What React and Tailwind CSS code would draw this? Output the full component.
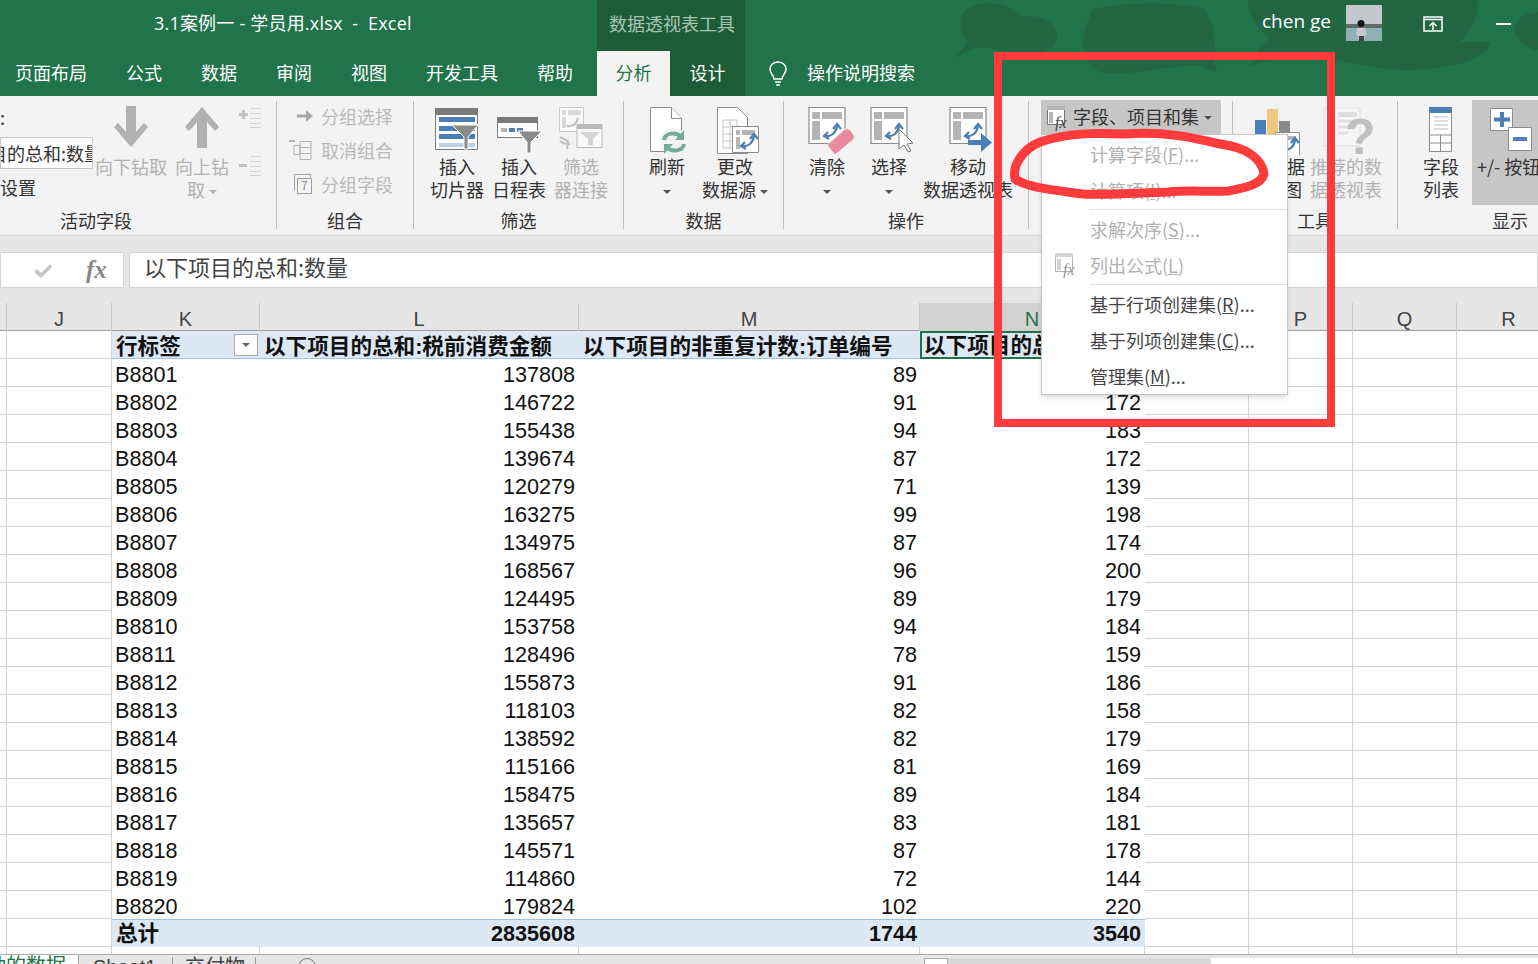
import React from 'react';

const rows = [
  ['B8801', '137808', '89', ''],
  ['B8802', '146722', '91', '172'],
  ['B8803', '155438', '94', '183'],
  ['B8804', '139674', '87', '172'],
  ['B8805', '120279', '71', '139'],
  ['B8806', '163275', '99', '198'],
  ['B8807', '134975', '87', '174'],
  ['B8808', '168567', '96', '200'],
  ['B8809', '124495', '89', '179'],
  ['B8810', '153758', '94', '184'],
  ['B8811', '128496', '78', '159'],
  ['B8812', '155873', '91', '186'],
  ['B8813', '118103', '82', '158'],
  ['B8814', '138592', '82', '179'],
  ['B8815', '115166', '81', '169'],
  ['B8816', '158475', '89', '184'],
  ['B8817', '135657', '83', '181'],
  ['B8818', '145571', '87', '178'],
  ['B8819', '114860', '72', '144'],
  ['B8820', '179824', '102', '220'],
];

const gridCols = 'grid grid-cols-[7px_105px_148px_319px_341px_225px_104px_104px_104px_104px]';
const rowGrid = `${gridCols} grid-rows-[28px]`;

const Caret = ({ className = '' }) => (
  <svg width="8" height="4" viewBox="0 0 8 4" className={`inline-block ${className}`}>
    <path d="M0 0h8L4 4z" fill="currentColor" />
  </svg>
);

const Swap = ({ x = 0, y = 0, color = '#4a7fb5' }) => (
  <g transform={`translate(${x} ${y})`} fill="none" stroke={color} strokeWidth="2.200">
    <path d="M2 14c6 1 11-3 12-10" />
    <path d="M10 7l4-5 4 5M5 10l-4 4 5 3" />
  </g>
);

const PivotBase = ({ children }) => (
  <svg width="62" height="50" viewBox="0 0 62 50">
    <path d="M13 2.500h36v36H13z" fill="#fff" stroke="#8c8c8c" strokeWidth="1.200" />
    <path d="M16 7h8v7h-8zM26 7h20v7H26zM16 16h8v19h-8z" fill="#b4b4b4" />
    <Swap x={27} y={17} />
    {children}
  </svg>
);

const SlicerIcon = () => (
  <svg width="46" height="50" viewBox="0 0 46 50">
    <path d="M1.500 3.500h42v41h-42z" fill="#fff" stroke="#7a7a7a" />
    <path d="M1 3h43v7H1z" fill="#7a7a7a" />
    <path d="M5 12h36v5H5zM5 21h36v5H5zM5 29h36v5H5z" fill="#4a7fb5" />
    <path d="M5 38h36v4H5z" fill="#bcd0e6" />
    <path d="M18 20h26L34 32v12h-4V32z" fill="#8a8a8a" stroke="#fff" />
  </svg>
);

const TimelineIcon = () => (
  <svg width="46" height="50" viewBox="0 0 46 50">
    <path d="M1.500 12.500h40v20h-40z" fill="#fff" stroke="#7a7a7a" />
    <path d="M1 12h41v6H1z" fill="#7a7a7a" />
    <path d="M5 23h6v4H5z" fill="#b4b4b4" />
    <path d="M13 23h6v4h-6zM21 23h6v4h-6z" fill="#4a7fb5" />
    <path d="M22 26h24L35 37v11h-4V37z" fill="#8a8a8a" stroke="#fff" />
  </svg>
);

const ConnectIcon = () => (
  <svg width="46" height="50" viewBox="0 0 46 50" opacity="0.55">
    <path d="M1.500 2.500h24v24h-24z" fill="#fff" stroke="#a8a8a8" />
    <path d="M4 5h4v5H4zM10 5h13v5H10zM4 12h4v11H4z" fill="#c4c4c4" />
    <path d="M9 21c5 1 10-2 11-8" fill="none" stroke="#999" strokeWidth="2" />
    <path d="M19 19.500h25v23H19z" fill="#fff" stroke="#8c8c8c" />
    <path d="M19 19h25v5H19z" fill="#8c8c8c" />
    <path d="M22 27h20l-7 7v6h-5v-6z" fill="#bbb" />
    <path d="M2 32l8 4-1 8M2 36c3 3 6 3 10 3" fill="none" stroke="#999" strokeWidth="2" />
  </svg>
);

const RefreshIcon = () => (
  <svg width="46" height="50" viewBox="0 0 46 50">
    <path d="M6.500 2.500h21l10 11v33h-31z" fill="#fff" stroke="#8c8c8c" />
    <path d="M27.500 2.500v11h10" fill="#fff" stroke="#8c8c8c" />
    <circle cx="30" cy="37" r="14" fill="#f3f3f3" />
    <path d="M20 35c1-7 12-9 17-3M40 39c-1 7-12 9-17 3" fill="none" stroke="#72ad95" strokeWidth="4" />
    <path d="M40 25v10h-9zM20 49V39h9z" fill="#72ad95" />
  </svg>
);

const ChangeSourceIcon = () => (
  <svg width="50" height="50" viewBox="0 0 50 50" className="ml-[8px]">
    <path d="M3.500 2.500h20l10 10v36h-30z" fill="#fff" stroke="#8c8c8c" />
    <path d="M9 15h14v28H9z" fill="none" stroke="#c4c4c4" />
    <path d="M9 22h14M9 29h14M9 36h14M16 15v28" stroke="#c4c4c4" />
    <path d="M18.500 21.500h26v26h-26z" fill="#fff" stroke="#8c8c8c" />
    <path d="M22 25h4v5h-4zM28 25h13v5H28zM22 32h4v12h-4z" fill="#b4b4b4" />
    <Swap x={26} y={27} />
  </svg>
);

const ChartIcon = () => (
  <svg width="62" height="50" viewBox="0 0 62 50">
    <path d="M11 15h11v30H11z" fill="#4a7fb5" />
    <path d="M23 4h11v40H23z" fill="#efc87d" />
    <path d="M35 16h11v28H35z" fill="#8a8a8a" />
    <path d="M31.500 27.500h24v24h-24z" fill="#fff" stroke="#8c8c8c" />
    <path d="M35 31h4v4h-4zM41 31h11v4H41z" fill="#b4b4b4" />
    <Swap x={37} y={31} />
  </svg>
);

const RecommendIcon = () => (
  <svg width="62" height="50" viewBox="0 0 62 50">
    <path d="M9 3h36v38H9z" fill="#f6f6f6" stroke="#dcdcdc" />
    <path d="M12 7h8v30h-8zM23 7h19v5H23z" fill="#dcdcdc" />
    <path d="M23 16h19M23 22h19M23 28h10" stroke="#e4dce4" strokeWidth="3" />
    <text x="30" y="49" fontSize="50" fontWeight="700" fill="#bfbfbf" fontFamily="Liberation Sans, sans-serif">?</text>
  </svg>
);

const FieldListIcon = () => (
  <svg width="26" height="50" viewBox="0 0 26 50">
    <path d="M1.500 2.500h22v44h-22z" fill="#fff" stroke="#8c8c8c" />
    <path d="M1 2h23v6H1z" fill="#4a7fb5" />
    <path d="M6 12h14M6 16h14M6 20h14M6 24h14" stroke="#bbb" />
    <path d="M1 30h23M1 38h23M12.500 30v16" stroke="#8c8c8c" />
  </svg>
);

const PlusMinusIcon = () => (
  <svg width="46" height="46" viewBox="0 0 46 46">
    <path d="M1.500 1.500h22v22h-22z" fill="#fff" stroke="#8c8c8c" />
    <path d="M5 10.500h6V5h4v5.500h6v4h-6V20h-4v-5.500H5z" fill="#4a7fb5" />
    <path d="M19.500 20.500h23v23h-23z" fill="#fff" stroke="#8c8c8c" />
    <path d="M24 30h14v4H24z" fill="#4a7fb5" />
  </svg>
);

const ListFxIcon = ({ muted }) => (
  <svg width="24" height="26" viewBox="0 0 24 26" opacity={muted ? 0.55 : 1}>
    <path d="M1.500 1.500h17v18h-17z" fill="#fff" stroke="#777" />
    <path d="M1 1h18v4H1zM3 7h4v11H3z" fill="#b4b4b4" />
    <text x="9" y="23" fontSize="16" fontStyle="italic" fontFamily="Liberation Serif, serif" fill="#444">fx</text>
  </svg>
);

const IndentIcon = ({ minus }) => (
  <svg width="24" height="22" viewBox="0 0 24 22" opacity="0.75">
    <path d={minus ? 'M1 9h8v3H1z' : 'M1 6h3V3h3v3h3v3H7v3H4V9H1z'} fill="#b1b1b1" />
    <path d="M12 1.500h11M12 6.500h11M12 11.500h11M12 16.500h11M12 20.500h11" stroke="#c8c8c8" />
  </svg>
);

const BigBtn = ({ w, icon, lines, disabled }) => (
  <div className={`flex flex-col items-center ${w} ${disabled ? 'text-[#b1b1b1]' : 'text-[#333]'}`}>
    <div className="flex h-[50px] items-start justify-center">{icon}</div>
    <div className="text-center text-[18px] leading-[23px] whitespace-nowrap">
      {lines.map((l, i) => (
        <div key={i}>{l}</div>
      ))}
    </div>
  </div>
);

const Group = ({ w, label, labelClass = '', className = '', children }) => (
  <>
    <div className={`flex ${w} shrink-0 flex-col`}>
      <div className={`flex h-[112px] pt-[9px] ${className}`}>{children}</div>
      <div className={`h-[24px] text-center text-[18px] leading-[24px] text-[#333] ${labelClass}`}>{label}</div>
    </div>
    <div className="mt-[5px] h-[128px] w-px shrink-0 bg-[#bdbdbd]" />
  </>
);

const SmallRow = ({ icon, text }) => (
  <div className="flex h-[34px] items-center text-[18px] text-[#b9b9b9]">
    <div className="flex w-[44px] shrink-0 justify-end pr-[8px]">{icon}</div>
    {text}
  </div>
);

const MenuItem = ({ text, hot, rest, disabled, icon }) => (
  <div className={`flex h-[36px] items-center text-[18px] ${disabled ? 'text-[#b1b1b1]' : 'text-[#444]'}`}>
    <div className="flex w-[48px] shrink-0 justify-center">{icon}</div>
    <span>
      {text}(<span className="underline">{hot}</span>){rest}
    </span>
  </div>
);

const Ink = () => (
  <svg width="1538" height="964" viewBox="0 0 1538 964" className="pointer-events-none absolute top-0 left-0">
    <path d="M998 56h333v367H998z" fill="none" stroke="#ff3b3b" strokeWidth="8" />
    <path
      d="M1040 142c30-10 60-9 85-8 40-3 70 4 95 10 25 3 42 14 44 30-3 11-20 14-36 17-18 1-40-1-60 1-30 1-60 3-85 2-30-4-55-6-68-15-3-14 8-30 25-37z"
      fill="none"
      stroke="#ff3b3b"
      strokeWidth="9"
      strokeLinejoin="round"
    />
  </svg>
);

export default function App() {
  return (
    <div className="relative h-[964px] w-[1538px] overflow-hidden bg-white font-['Noto_Sans_CJK_SC',sans-serif] text-[#222]">
      {/* title + tabs */}
      <div className="relative h-[96px] overflow-hidden bg-[#21734a] text-white">
        <svg width="1538" height="96" viewBox="0 0 1538 96" className="absolute top-0 left-0" fill="#226742">
          <path d="M955 58l13-16c-13-17-10-37 17-39 20-1 30 7 35 14 20-3 37 5 37 19 0 14-17 20-42 18-15-4-30-8-40-6z" />
          <path d="M1092 10c18-7 88-10 113 0 10 15 12 40 9 50l3 12-17-6c-30-2-70 12-100 6-15-7-20-27-15-42z" />
          <path d="M1248 0h230c0 20-8 30-18 42h30c2 18-50 30-90 28-30-2-60-8-90-18-20 3-40 8-60 14 5-16 12-21 20-28-15-13-22-23-22-38z" />
          <path d="M1538 12c-13 0-23 8-24 18 6 14 16 20 24 20z" />
        </svg>
        <div className="relative flex h-[51px]">
          <div className="w-[597px] pt-[10px] pl-[154px] font-['Open_Sans','Noto_Sans_CJK_SC',sans-serif] text-[18px] leading-[27px] tracking-[0.2px] whitespace-pre">3.1案例一 - 学员用.xlsx  -  Excel</div>
          <div className="w-[148px] bg-[#1e5c38] pt-[10px] pl-[12px] text-[18px] leading-[27px] text-[#a5c6b2]">数据透视表工具</div>
          <div className="flex flex-1 items-start justify-end">
            <div className="pt-[8px] font-['Open_Sans',sans-serif] text-[19px] leading-[27px]">chen ge</div>
            <svg width="36" height="36" viewBox="0 0 36 36" className="mt-[5px] ml-[15px]">
              <path d="M0 0h36v20H0z" fill="#c4c8cc" />
              <path d="M0 19h36v4H0z" fill="#5f6c66" />
              <path d="M0 23h36v13H0z" fill="#8fb0b5" />
              <circle cx="15" cy="18.500" r="3.500" fill="#141414" />
              <path d="M11 23h8l2 7h-2l-1 6h-5l-1-6h-2z" fill="#c9c9d1" />
              <path d="M13 31h5v5h-5z" fill="#444" />
            </svg>
            <svg width="20" height="16" viewBox="0 0 20 16" className="mt-[16px] ml-[41px]">
              <path d="M1 1h18v14H1z" fill="none" stroke="#fff" strokeWidth="1.500" />
              <path d="M1 3.500h18M10 14V7M6.500 10L10 6.500l3.500 3.500" fill="none" stroke="#fff" strokeWidth="1.500" />
            </svg>
            <div className="mt-[23px] mr-[27px] ml-[53px] h-[2px] w-[15px] bg-white" />
          </div>
        </div>
        <div className="relative flex h-[45px] items-stretch text-[18px] leading-[42px]">
          <div className="flex w-[597px] shrink-0 gap-[39px] pl-[15px]">
            {['页面布局', '公式', '数据', '审阅', '视图', '开发工具', '帮助'].map((t) => (
              <span key={t}>{t}</span>
            ))}
          </div>
          <div className="w-[73px] bg-[#f3f3f3] text-center text-[#217346]">分析</div>
          <div className="w-[75px] bg-[#1e5c38] text-center">设计</div>
          <svg width="22" height="26" viewBox="0 0 22 26" className="mt-[10px] ml-[22px]" fill="none" stroke="#fff" strokeWidth="1.500">
            <path d="M7 18c0-4-4-5-4-10a8 7 0 0 1 16 0c0 5-4 6-4 10zM8 21h6M9 24h4" />
          </svg>
          <span className="ml-[18px]">操作说明搜索</span>
        </div>
      </div>

      {/* ribbon */}
      <div className="flex h-[140px] overflow-hidden border-b border-[#d4d4d4] bg-[#f3f3f3]">
        <Group w="w-[276px]" label="活动字段" labelClass="pr-[84px]">
          <div className="-mt-[9px] flex w-[93px] shrink-0 flex-col text-[18px] text-[#333]">
            <div className="h-[41px] pt-[8px] leading-[27px]">:</div>
            <div className="h-[32px] overflow-hidden border border-[#c6c6c6] bg-white text-[18px] leading-[30px] whitespace-nowrap">
              <span className="-ml-[12px] inline-block">目的总和:数量</span>
            </div>
            <div className="pt-[5px] leading-[27px]">设置</div>
          </div>
          <BigBtn
            w="w-[76px]"
            disabled
            icon={
              <svg width="34" height="44" viewBox="0 0 34 44"><path d="M12 1h10v26l8-9 4 4-17 20L0 22l4-4 8 9z" fill="#b1b1b3" /></svg>
            }
            lines={['向下钻取']}
          />
          <BigBtn
            w="w-[66px]"
            disabled
            icon={
              <svg width="34" height="44" viewBox="0 0 34 44"><path d="M12 43h10V17l8 9 4-4L17 2 0 22l4 4 8-9z" fill="#b1b1b3" /></svg>
            }
            lines={['向上钻', <span key="q">取 <Caret /></span>]}
          />
          <div className="mt-[2px] flex flex-col gap-[26px] pl-[3px]">
            <IndentIcon />
            <IndentIcon minus />
          </div>
        </Group>

        <Group w="w-[136px]" label="组合" className="flex-col !pt-[3px]">
          <SmallRow
            text="分组选择"
            icon={<svg width="16" height="12" viewBox="0 0 16 12"><path d="M0 4.500h9V0l7 6-7 6V7.500H0z" fill="#aaa" /></svg>}
          />
          <SmallRow
            text="取消组合"
            icon={
              <svg width="24" height="24" viewBox="0 0 24 24" fill="none" stroke="#b1b1b1">
                <path d="M11 3.500h11v18H11zM11 9.500h11M11 15.500h11M5 7.500h6v9H5z" />
                <path d="M0 3h6" strokeWidth="2" />
              </svg>
            }
          />
          <SmallRow
            text="分组字段"
            icon={
              <svg width="20" height="22" viewBox="0 0 20 22" fill="none" stroke="#a0a0a0">
                <path d="M1.500 1.500h16v3M1.500 1.500v16" />
                <path d="M4.500 5.500h14v15h-14z" fill="#f6f6f6" />
                <text x="8" y="17" fontSize="12" fill="#888" stroke="none">7</text>
              </svg>
            }
          />
        </Group>

        <Group w="w-[209px]" label="筛选" className="pl-[12px]">
          <BigBtn w="w-[62px]" icon={<SlicerIcon />} lines={['插入', '切片器']} />
          <BigBtn w="w-[62px]" icon={<TimelineIcon />} lines={['插入', '日程表']} />
          <BigBtn w="w-[62px]" disabled icon={<ConnectIcon />} lines={['筛选', '器连接']} />
        </Group>

        <Group w="w-[159px]" label="数据" className="pl-[12px]">
          <BigBtn w="w-[62px]" icon={<RefreshIcon />} lines={['刷新', <Caret key="c" className="text-[#555]" />]} />
          <BigBtn w="w-[74px]" icon={<ChangeSourceIcon />} lines={['更改', <span key="s">数据源 <Caret className="text-[#555]" /></span>]} />
        </Group>

        <Group w="w-[244px]" label="操作" className="pl-[12px]">
          <BigBtn
            w="w-[62px]"
            icon={
              <PivotBase>
                <path d="M31 40l18-16q3-1 5 1l4 5q1 3-1 5L39 50z" fill="#e98b9d" stroke="#f3f3f3" />
              </PivotBase>
            }
            lines={['清除', <Caret key="c" className="text-[#555]" />]}
          />
          <BigBtn
            w="w-[62px]"
            icon={
              <PivotBase>
                <path d="M41 24v20l5-4 4 7 3-1-4-7 6-1z" fill="#fff" stroke="#777" />
              </PivotBase>
            }
            lines={['选择', <Caret key="c" className="text-[#555]" />]}
          />
          <BigBtn
            w="w-[96px]"
            icon={
              <PivotBase>
                <path d="M31 35h13v-7l11 9.500L44 47v-7H31z" fill="#4a7fb5" />
              </PivotBase>
            }
            lines={['移动', '数据透视表']}
          />
        </Group>

        <Group w="w-[203px]">
          <div className="-mt-[5px] ml-[12px] flex h-[35px] w-[180px] items-center gap-[3px] bg-[#c6c6c6] pl-[5px] text-[18px] text-[#333]">
            <ListFxIcon />
            <span className="-mt-[3px]">字段、项目和集</span>
            <Caret className="ml-[2px] text-[#555]" />
          </div>
        </Group>

        <Group w="w-[164px]" label="工具" className="pl-[11px]">
          <BigBtn
            w="w-[62px]"
            icon={<ChartIcon />}
            lines={[<span key="a" className="pl-[24px]">数据</span>, '透视图']}
          />
          <BigBtn w="w-[72px] ml-[4px]" disabled icon={<RecommendIcon />} lines={['推荐的数', '据透视表']} />
        </Group>

        <div className="flex min-w-0 flex-1 flex-col">
          <div className="flex h-[112px] pt-[9px]">
            <BigBtn w="w-[74px] ml-[6px] -mr-[6px]" icon={<FieldListIcon />} lines={['字段', '列表']} />
            <div className="relative -mt-[5px] h-[105px] flex-1 overflow-hidden bg-[#c6c6c6] pt-[7px] text-[18px] leading-[23px] whitespace-nowrap text-[#333]">
              <div className="flex h-[48px] pl-[17px]"><PlusMinusIcon /></div>
              <div className="pl-[5px]">+/- 按钮</div>
            </div>
          </div>
          <div className="h-[24px] pl-[94px] text-[18px] leading-[24px] text-[#333]">显示</div>
        </div>
      </div>

      {/* formula bar + column headers */}
      <div className="bg-[#e6e6e6]">
        <div className="flex h-[52px] gap-[5px] pt-[16px]">
          <div className="relative h-[36px] w-[124px] border border-[#d4d4d4] bg-white">
            <svg width="20" height="16" viewBox="0 0 20 16" className="mt-[10px] ml-[32px]">
              <path d="M1 9l3-3 4 4 9-9 2 3L8 15z" fill="#c6c6c6" />
            </svg>
            <span className="absolute -top-[2px] left-[85px] font-['Liberation_Serif',serif] text-[25px] font-bold italic text-[#888]">fx</span>
          </div>
          <div className="h-[36px] flex-1 border border-[#d4d4d4] bg-white pl-[14px] text-[22px] leading-[27px] text-[#444]">以下项目的总和:数量</div>
        </div>
        <div className="h-[15px]" />
        <div className={`${rowGrid} h-[28px] border-b border-[#9e9e9e] text-center font-['Liberation_Sans',sans-serif] text-[20px] leading-[33px] text-[#444]`}>
          <div className="border-r border-[#c4c4c4]" />
          {['J', 'K', 'L', 'M', 'N', 'O', 'P', 'Q', 'R'].map((c) => (
            <div key={c} className={`border-r border-[#c4c4c4] ${c === 'N' ? 'bg-[#d2d2d2] text-[#217346]' : ''}`}>{c === 'O' ? '' : c}</div>
          ))}
        </div>
      </div>

      {/* sheet */}
      <div className="font-['Liberation_Sans','Noto_Sans_CJK_SC',sans-serif] text-[21.6px] leading-[32px] text-[#111]">
        <div className={`${rowGrid} h-[28px]`}>
          <div className="border-r border-b border-[#d4d4d4]" />
          <div className="border-r border-b border-[#d4d4d4]" />
          <div className="relative border-b border-[#9dc3e6] bg-[#dce9f5] pl-[4px] font-bold whitespace-nowrap">
            行标签
            <div className="absolute top-[3px] right-[2px] flex h-[22px] w-[24px] items-center justify-center border border-[#aaa] bg-white text-[#666]">
              <Caret />
            </div>
          </div>
          <div className="border-b border-[#9dc3e6] bg-[#dce9f5] pl-[4px] font-bold whitespace-nowrap">以下项目的总和:税前消费金额</div>
          <div className="border-b border-[#9dc3e6] bg-[#dce9f5] pl-[4px] font-bold whitespace-nowrap">以下项目的非重复计数:订单编号</div>
          <div className="overflow-hidden border-2 border-[#217346] bg-[#dce9f5] pl-[2px] leading-[26px] font-bold whitespace-nowrap">以下项目的总和:数量</div>
          {[0, 1, 2, 3].map((i) => (
            <div key={i} className="border-r border-b border-[#d4d4d4]" />
          ))}
        </div>
        {rows.map((r) => (
          <div key={r[0]} className={`${rowGrid} h-[28px]`}>
            <div className="border-r border-b border-[#d4d4d4]" />
            <div className="border-r border-b border-[#d4d4d4]" />
            <div className="pl-[3px]">{r[0]}</div>
            <div className="pr-[4px] text-right">{r[1]}</div>
            <div className="pr-[3px] text-right">{r[2]}</div>
            <div className="pr-[4px] text-right">{r[3]}</div>
            {[0, 1, 2, 3].map((i) => (
              <div key={i} className="border-r border-b border-[#d4d4d4]" />
            ))}
          </div>
        ))}
        <div className={`${rowGrid} h-[28px]`}>
          <div className="border-r border-b border-[#d4d4d4]" />
          <div className="border-r border-b border-[#d4d4d4]" />
          <div className="border-t border-[#9dc3e6] bg-[#dce9f5] pl-[4px] leading-[28px] font-bold">总计</div>
          <div className="border-t border-[#9dc3e6] bg-[#dce9f5] pr-[4px] text-right leading-[28px] font-bold">2835608</div>
          <div className="border-t border-[#9dc3e6] bg-[#dce9f5] pr-[3px] text-right leading-[28px] font-bold">1744</div>
          <div className="border-t border-[#9dc3e6] bg-[#dce9f5] pr-[4px] text-right leading-[28px] font-bold">3540</div>
          {[0, 1, 2, 3].map((i) => (
            <div key={i} className="border-r border-b border-[#d4d4d4]" />
          ))}
        </div>
        <div className={`${gridCols} h-[7px]`}>
          {[0, 1, 2, 3, 4, 5, 6, 7, 8, 9].map((i) => (
            <div key={i} className="border-r border-[#d4d4d4]" />
          ))}
        </div>
      </div>

      {/* sheet tabs */}
      <div className="flex h-[10px] overflow-hidden border-t border-[#ababab] bg-[#e6e6e6] font-['Liberation_Sans','Noto_Sans_CJK_SC',sans-serif] text-[20px] leading-[24px] whitespace-nowrap">
        <div className="-mt-[1px] w-[79px] shrink-0 border-r border-[#ababab] bg-white text-[#217346]">
          <span className="-ml-[14px] inline-block">动的数据</span>
        </div>
        <span className="ml-[14px] w-[63px] shrink-0 text-[#444]">Sheet1</span>
        <span className="mt-[2px] ml-[16px] h-[8px] w-px shrink-0 bg-[#999]" />
        <span className="ml-[12px] w-[60px] shrink-0 text-[#444]">交付物</span>
        <span className="mt-[2px] ml-[10px] h-[8px] w-px shrink-0 bg-[#999]" />
        <span className="mt-[3px] ml-[42px] h-[18px] w-[18px] shrink-0 rounded-full border border-[#777]" />
        <div className="mt-[3px] ml-[608px] h-[10px] w-[24px] shrink-0 border border-[#ababab] bg-white" />
        <div className="mt-[3px] h-[10px] w-[263px] shrink-0 bg-[#d9d9d9]" />
        <div className="mt-[3px] h-[10px] flex-1 bg-white" />
      </div>

      {/* dropdown menu */}
      <div className="absolute top-[134px] left-[1041px] w-[247px] border border-[#c6c6c6] bg-white pt-[1px] shadow-md">
        <MenuItem disabled text="计算字段" hot="F" rest="..." />
        <MenuItem disabled text="计算项" hot="I" rest="..." />
        <div className="my-[1px] ml-[48px] h-px bg-[#e1e1e1]" />
        <MenuItem disabled text="求解次序" hot="S" rest="..." />
        <MenuItem disabled text="列出公式" hot="L" icon={<ListFxIcon muted />} />
        <div className="my-[1px] ml-[48px] h-px bg-[#e1e1e1]" />
        <MenuItem text="基于行项创建集" hot="R" rest="..." />
        <MenuItem text="基于列项创建集" hot="C" rest="..." />
        <MenuItem text="管理集" hot="M" rest="..." />
      </div>

      <Ink />
    </div>
  );
}
